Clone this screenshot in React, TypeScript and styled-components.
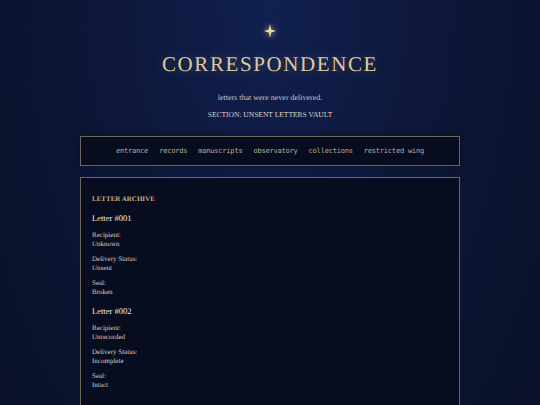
import styled, { createGlobalStyle } from 'styled-components';

const GlobalStyle = createGlobalStyle`
  html, body {
    margin: 0;
    padding: 0;
  }

  body {
    min-height: 405px;
    background-color: #0c1636;
    background-image:
      radial-gradient(circle, rgba(120, 140, 200, 0.12) 0.6px, transparent 1px),
      radial-gradient(ellipse at 50% 0%, #112050 0%, #0d1738 45%, #090f26 100%);
    background-size: 57px 57px, 100% 100%;
    font-family: 'Liberation Serif', 'DejaVu Serif', serif;
    color: #d8d2c2;
    overflow: hidden;
    -webkit-font-smoothing: antialiased;
    text-rendering: geometricPrecision;
  }
`;

const Page = styled.div`
  width: 380px;
  margin: 0 auto;
  padding-top: 24px;
`;

const Header = styled.header`
  display: flex;
  flex-direction: column;
  align-items: center;
`;

const Star = styled.div`
  width: 12px;
  height: 14px;
  display: flex;
  align-items: center;
  justify-content: center;
  filter: drop-shadow(0 0 3px rgba(240, 210, 140, 0.8));
`;

const Title = styled.h1`
  margin: 13px 0 0;
  font-family: 'Liberation Serif', serif;
  font-weight: 400;
  font-size: 21px;
  line-height: 26px;
  letter-spacing: 1.6px;
  color: #dccba0;
  text-shadow: 0 0 8px rgba(220, 200, 150, 0.25);
`;

const Subtitle = styled.p`
  margin: 15px 0 0;
  font-size: 8px;
  line-height: 12px;
  color: #c2c0c6;
`;

const Section = styled.p`
  margin: 5px 0 0;
  font-size: 7.5px;
  line-height: 12px;
  color: #d6d3cc;
`;

const Nav = styled.nav`
  margin-top: 15px;
  height: 30px;
  box-sizing: border-box;
  border: 1px solid #6d6757;
  background: #080c1f;
  display: flex;
  align-items: center;
  justify-content: center;
  gap: 11px;
  box-shadow: 0 0 10px rgba(0, 0, 0, 0.35);
`;

const NavLink = styled.a`
  font-family: 'DejaVu Sans Mono', 'Liberation Mono', monospace;
  font-size: 7px;
  letter-spacing: -0.2px;
  color: #b8b09c;
  text-decoration: none;
  cursor: pointer;
`;

const Archive = styled.section`
  margin-top: 11px;
  border: 1px solid #6d6757;
  background: #080c1f;
  padding: 16px 11px 40px;
  min-height: 260px;
`;

const ArchiveTitle = styled.h2`
  margin: 0;
  font-size: 7px;
  line-height: 10px;
  font-weight: 700;
  text-transform: uppercase;
  color: #c9b68c;
`;

const LetterTitle = styled.h3`
  margin: 8px 0 0;
  font-size: 8.5px;
  line-height: 12px;
  font-weight: 400;
  color: #f3efe6;
`;

const Field = styled.div`
  margin-top: 7px;
  font-size: 7px;
  line-height: 9px;
  color: #d4cfc4;

  & + & {
    margin-top: 6px;
  }
`;

const letters = [
  {
    id: '#001',
    fields: [
      { label: 'Recipient:', value: 'Unknown' },
      { label: 'Delivery Status:', value: 'Unsent' },
      { label: 'Seal:', value: 'Broken' },
    ],
  },
  {
    id: '#002',
    fields: [
      { label: 'Recipient:', value: 'Unrecorded' },
      { label: 'Delivery Status:', value: 'Incomplete' },
      { label: 'Seal:', value: 'Intact' },
    ],
  },
];

const navItems = ['entrance', 'records', 'manuscripts', 'observatory', 'collections', 'restricted wing'];

const App = () => {
  return (
    <>
      <GlobalStyle />
      <Page>
        <Header>
          <Star>
            <svg width="12" height="14" viewBox="0 0 12 14">
              <path d="M6 0 L7.2 5.6 L12 7 L7.2 8.4 L6 14 L4.8 8.4 L0 7 L4.8 5.6 Z" fill="#f0d9a0" />
            </svg>
          </Star>
          <Title>CORRESPONDENCE</Title>
          <Subtitle>letters that were never delivered.</Subtitle>
          <Section>SECTION: UNSENT LETTERS VAULT</Section>
        </Header>
        <Nav>
          {navItems.map((item) => (
            <NavLink key={item}>{item}</NavLink>
          ))}
        </Nav>
        <Archive>
          <ArchiveTitle>Letter Archive</ArchiveTitle>
          {letters.map(({ id, fields }) => (
            <div key={id}>
              <LetterTitle>Letter {id}</LetterTitle>
              {fields.map(({ label, value }) => (
                <Field key={label}>
                  {label}
                  <br />
                  {value}
                </Field>
              ))}
            </div>
          ))}
        </Archive>
      </Page>
    </>
  );
};

export default App;
